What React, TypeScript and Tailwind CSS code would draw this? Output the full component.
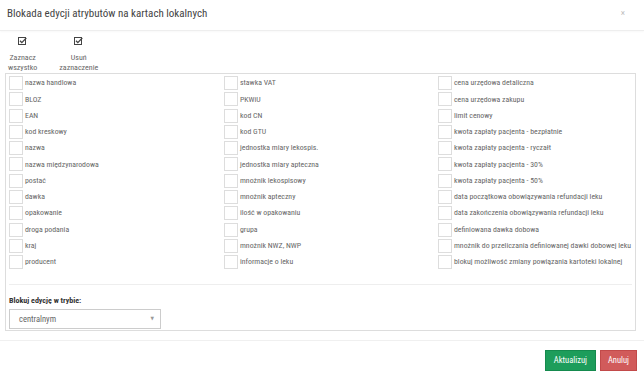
import { useState } from 'react';

const COLUMNS: string[][] = [
    [
        'nazwa handlowa',
        'BLOZ',
        'EAN',
        'kod kreskowy',
        'nazwa',
        'nazwa międzynarodowa',
        'postać',
        'dawka',
        'opakowanie',
        'droga podania',
        'kraj',
        'producent',
    ],
    [
        'stawka VAT',
        'PKWiU',
        'kod CN',
        'kod GTU',
        'jednostka miary lekospis.',
        'jednostka miary apteczna',
        'mnożnik lekospisowy',
        'mnożnik apteczny',
        'ilość w opakowaniu',
        'grupa',
        'mnożnik NWZ, NWP',
        'informacje o leku',
    ],
    [
        'cena urzędowa detaliczna',
        'cena urzędowa zakupu',
        'limit cenowy',
        'kwota zapłaty pacjenta - bezpłatnie',
        'kwota zapłaty pacjenta - ryczałt',
        'kwota zapłaty pacjenta - 30%',
        'kwota zapłaty pacjenta - 50%',
        'data początkowa obowiązywania refundacji leku',
        'data zakończenia obowiązywania refundacji leku',
        'definiowana dawka dobowa',
        'mnożnik do przeliczania definiowanej dawki dobowej leku',
        'blokuj możliwość zmiany powiązania kartoteki lokalnej',
    ],
];

const FONT = "font-['Roboto_Condensed','Liberation_Sans_Narrow','DejaVu_Sans_Condensed',sans-serif]";

function CheckIcon() {
    return (
        <svg width="9" height="8" viewBox="0 0 9 8" className="block">
            <rect x="0.5" y="0.5" width="7" height="7" fill="none" stroke="#444" strokeWidth="1" />
            <path d="M2 3.8 L3.8 5.6 L8.3 1" fill="none" stroke="#444" strokeWidth="1.3" />
        </svg>
    );
}

export default function App() {
    const [checked, setChecked] = useState<Record<string, boolean>>({});

    const setAll = (value: boolean) => {
        const next: Record<string, boolean> = {};
        COLUMNS.flat().forEach(name => { next[name] = value; });
        setChecked(next);
    };

    return (
        <div className={`w-[644px] h-[372px] bg-white text-[#666] overflow-hidden flex flex-col ${FONT}`}>
            <div className="h-[31px] shrink-0 border-b border-[#eeeeee] flex items-center justify-between pl-[7px] pr-[19px] shadow-[0_1px_2px_rgba(0,0,0,0.03)]">
                <h1 className="text-[11px] text-[#444] leading-none -mt-[4px]">Blokada edycji atrybutów na kartach lokalnych</h1>
                <span className="text-[9px] text-[#bbb] leading-none -mt-[4px]">×</span>
            </div>

            <div className="flex gap-[22px] pl-[8px] pt-[6px] h-[42px] shrink-0">
                <button onClick={() => setAll(true)} className="flex flex-col items-center text-[8px] leading-[10px] text-[#666]">
                    <CheckIcon />
                    <span className="mt-[8px]">Zaznacz</span>
                    <span>wszystko</span>
                </button>
                <button onClick={() => setAll(false)} className="flex flex-col items-center text-[8px] leading-[10px] text-[#666]">
                    <CheckIcon />
                    <span className="mt-[8px]">Usuń</span>
                    <span>zaznaczenie</span>
                </button>
            </div>

            <div className="mx-[5px] w-[631px] h-[258px] shrink-0 border border-[#dddddd] px-[3px] pt-[1px] flex flex-col">
                <div className="grid grid-cols-[215px_214px_1fr]">
                    {COLUMNS.map((col, ci) => (
                        <div key={ci} className="flex flex-col">
                            {col.map(name => (
                                <label key={name} className="h-[16.27px] flex items-center gap-[2px] text-[7.8px] text-[#666] cursor-pointer">
                                    <input
                                        type="checkbox"
                                        checked={!!checked[name]}
                                        onChange={e => setChecked(c => ({ ...c, [name]: e.target.checked }))}
                                        className="appearance-none w-[14px] h-[14px] border border-[#ddd] bg-white shrink-0 checked:bg-[#3c8dbc]"
                                    />
                                    <span className="whitespace-nowrap">{name}</span>
                                </label>
                            ))}
                        </div>
                    ))}
                </div>

                <div className="mt-[14px] border-t border-[#eeeeee]" />

                <div className="mt-[12px] text-[8px] font-bold text-[#333] leading-none">Blokuj edycję w trybie:</div>
                <div className="mt-[4px] w-[152px] h-[20px] border border-[#ccc] flex items-center justify-between pl-[9px] pr-[6px] text-[8.5px] text-[#666]">
                    <span>centralnym</span>
                    <span className="text-[5px] text-[#999]">▼</span>
                </div>
            </div>

            <div className="mt-[9px] border-t border-[#f0f0f0] flex-1 flex items-start justify-end gap-[4px] pr-[7px] pt-[9px]">
                <button className="h-[21px] px-[8px] bg-[#1d9d5b] text-white text-[8.5px] border border-[#158a4e]">Aktualizuj</button>
                <button className="h-[21px] px-[7px] bg-[#d15b5b] text-white text-[8.5px] border border-[#c24a4a]">Anuluj</button>
            </div>
        </div>
    );
}
